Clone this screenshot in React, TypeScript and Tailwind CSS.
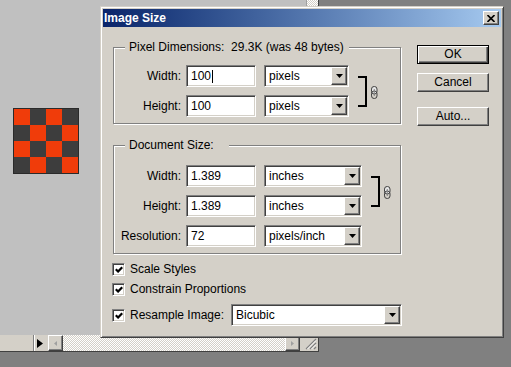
import React from "react";

const sunken =
  "border border-t-[#808080] border-l-[#808080] border-r-white border-b-white shadow-[inset_1px_1px_0_#404040,inset_-1px_-1px_0_#d4d0c8]";
const raised =
  "border border-t-white border-l-white border-r-[#404040] border-b-[#404040] shadow-[inset_-1px_-1px_0_#808080]";
const etched =
  "border border-[#808080] shadow-[inset_1px_1px_0_#ffffff,1px_1px_0_#ffffff]";
const dither =
  "bg-[repeating-conic-gradient(#d4d0c8_0%_25%,#ffffff_0%_50%)] bg-[length:2px_2px]";

function DownArrow() {
  return (
    <svg width="7" height="4" viewBox="0 0 7 4">
      <path d="M0 0h7L3.5 4z" fill="#000" />
    </svg>
  );
}

function Select({ value, w }: { value: string; w: string }) {
  return (
    <div className={`flex h-[22px] ${w} items-stretch bg-white p-[1px] ${sunken}`}>
      <span className="flex flex-1 items-center pl-[3px]">{value}</span>
      <span className={`flex w-[16px] items-center justify-center bg-[#d4d0c8] ${raised}`}>
        <DownArrow />
      </span>
    </div>
  );
}

function Field({ value, caret }: { value: string; caret?: boolean }) {
  return (
    <div className={`flex h-[22px] w-[70px] items-center bg-white pl-[4px] ${sunken}`}>
      {value}
      {caret && <span className="ml-[1px] h-[13px] w-px bg-black" />}
    </div>
  );
}

function Row({
  label,
  value,
  unit,
  unitW,
  caret,
}: {
  label: string;
  value: string;
  unit: string;
  unitW: string;
  caret?: boolean;
}) {
  return (
    <div className="flex h-[22px] items-center">
      <span className="w-[67px] whitespace-nowrap text-right">{label}</span>
      <div className="ml-[5px]">
        <Field value={value} caret={caret} />
      </div>
      <div className="ml-[8px]">
        <Select value={unit} w={unitW} />
      </div>
    </div>
  );
}

function Chain() {
  return (
    <div className="ml-[9px] flex items-center">
      <div className="h-[31px] w-[9px] border-y-2 border-r-2 border-black" />
      <svg className="ml-[4px] mt-[2px]" width="7" height="13" viewBox="0 0 7 13">
        <rect x="0.5" y="0.5" width="5.5" height="7.5" rx="2.6" fill="#e8e8e8" stroke="#404040" />
        <rect x="0.5" y="5" width="5.5" height="7.5" rx="2.6" fill="none" stroke="#404040" />
        <line x1="3.25" y1="3" x2="3.25" y2="10" stroke="#808080" />
      </svg>
    </div>
  );
}

function Check({ label }: { label: string }) {
  return (
    <div className="flex items-center">
      <div className={`flex h-[13px] w-[13px] items-center justify-center bg-white ${sunken}`}>
        <svg width="8" height="7" viewBox="0 0 8 7">
          <path d="M0.8 3.2l2.3 2.3L7.2 1.2" stroke="#000" strokeWidth="2.2" fill="none" />
        </svg>
      </div>
      <span className="ml-[5px] whitespace-nowrap">{label}</span>
    </div>
  );
}

function Button({ label, primary }: { label: string; primary?: boolean }) {
  return (
    <div
      className={`flex h-[19px] items-center justify-center ${
        primary
          ? "border border-black shadow-[inset_1px_1px_0_#ffffff,inset_-1px_-1px_0_#404040,inset_-2px_-2px_0_#808080]"
          : raised
      }`}
    >
      {label}
    </div>
  );
}

export default function App() {
  const cells = Array.from({ length: 16 }, (_, i) => (Math.floor(i / 4) + i) % 2 === 0);

  return (
    <div className="relative h-[367px] w-[511px] overflow-hidden bg-[#808080] font-['Liberation_Sans',Arial,sans-serif] text-[12px] leading-[13px] text-black">
      {/* document window */}
      <div className="absolute left-0 top-0 flex h-[352px] w-[319px] flex-col border-b border-r border-[#404040]">
        <div className="flex flex-1">
          <div className="flex-1 bg-[#c0c0c0] pl-[13px] pt-[108px]">
            <div className="grid w-[66px] grid-cols-4 border border-[#2a2a2a]">
              {cells.map((o, i) => (
                <div key={i} className={o ? "h-[16px] bg-[#f03c0a]" : "h-[16px] bg-[#3d3d3d]"} />
              ))}
            </div>
          </div>
          <div className={`w-[12px] border-l border-[#a0a0a0] ${dither}`} />
        </div>
        <div className="flex h-[16px] bg-[#d4d0c8]">
          <div className="w-[33px]" />
          <div className="w-[2px] border-l border-r border-l-[#808080] border-r-white" />
          <div className="flex w-[13px] items-center pl-[2px]">
            <svg width="6" height="9" viewBox="0 0 6 9">
              <path d="M0 0l6 4.5L0 9z" fill="#000" />
            </svg>
          </div>
          <div className={`flex w-[15px] items-center justify-center bg-[#d4d0c8] ${raised}`}>
            <svg width="3" height="5" viewBox="0 0 3 5">
              <path d="M3 0v5L0 2.5z" fill="#a0a0a0" />
            </svg>
          </div>
          <div className={`flex-1 ${dither}`} />
          <div className={`flex w-[15px] items-center justify-center bg-[#d4d0c8] ${raised}`}>
            <svg width="3" height="5" viewBox="0 0 3 5">
              <path d="M0 0v5l3-2.5z" fill="#a0a0a0" />
            </svg>
          </div>
          <div className="flex w-[18px] items-end justify-end bg-[#d4d0c8] pb-[1px] pr-[1px]">
            <svg width="12" height="12" viewBox="0 0 12 12">
              <path d="M11 1L1 11M11 5L5 11M11 9L9 11" stroke="#808080" strokeWidth="1.2" />
              <path d="M11 2.5L2.5 11M11 6.5L6.5 11" stroke="#ffffff" />
            </svg>
          </div>
        </div>
      </div>

      {/* Image Size dialog */}
      <div className="absolute left-[100px] top-[6px] flex h-[332px] w-[404px] flex-col border border-t-[#d4d0c8] border-l-[#d4d0c8] border-r-[#404040] border-b-[#404040] bg-[#d4d0c8] p-[2px] shadow-[inset_1px_1px_0_#ffffff,inset_-1px_-1px_0_#808080]">
        <div className="flex h-[18px] items-center justify-between bg-linear-to-r from-[#0a246a] to-[#a6caf0] pl-[1px] pr-[2px]">
          <span className="text-[12px] font-bold text-white">Image Size</span>
          <div className={`flex h-[14px] w-[16px] items-center justify-center bg-[#d4d0c8] ${raised}`}>
            <svg width="8" height="7" viewBox="0 0 8 7">
              <path d="M0.5 0l7 7M7.5 0l-7 7" stroke="#000" strokeWidth="1.6" />
            </svg>
          </div>
        </div>

        <div className="flex pl-[10px] pt-[18px]">
          <div className="flex w-[288px] flex-col pt-[2px]">
            <div className={`relative h-[77px] ${etched}`}>
              <span className="absolute left-[11px] top-[-7px] whitespace-pre bg-[#d4d0c8] pl-[4px] pr-[5px]">
                Pixel Dimensions:  29.3K (was 48 bytes)
              </span>
              <div className="flex items-center pt-[17px]">
                <div className="flex flex-col gap-[8px]">
                  <Row label="Width:" value="100" unit="pixels" unitW="w-[85px]" caret />
                  <Row label="Height:" value="100" unit="pixels" unitW="w-[85px]" />
                </div>
                <Chain />
              </div>
            </div>

            <div className={`relative mt-[21px] h-[109px] ${etched}`}>
              <span className="absolute left-[11px] top-[-7px] bg-[#d4d0c8] pl-[4px] pr-[15px]">
                Document Size:
              </span>
              <div className="flex flex-col gap-[8px] pt-[19px]">
                <div className="flex items-center">
                  <div className="flex flex-col gap-[8px]">
                    <Row label="Width:" value="1.389" unit="inches" unitW="w-[98px]" />
                    <Row label="Height:" value="1.389" unit="inches" unitW="w-[98px]" />
                  </div>
                  <Chain />
                </div>
                <Row label="Resolution:" value="72" unit="pixels/inch" unitW="w-[98px]" />
              </div>
            </div>

            <div className="ml-[-1px] mt-[7px] flex h-[17px] items-center">
              <Check label="Scale Styles" />
            </div>
            <div className="ml-[-1px] mt-[3px] flex h-[17px] items-center">
              <Check label="Constrain Proportions" />
            </div>
            <div className="-mr-[1px] ml-[-1px] mt-[6px] flex h-[22px] items-center">
              <Check label="Resample Image:" />
              <div className="ml-auto">
                <Select value="Bicubic" w="w-[171px]" />
              </div>
            </div>
          </div>

          <div className="ml-[16px] flex w-[72px] flex-col">
            <Button label="OK" primary />
            <div className="mt-[9px]">
              <Button label="Cancel" />
            </div>
            <div className="mt-[15px]">
              <Button label="Auto..." />
            </div>
          </div>
        </div>
      </div>
    </div>
  );
}
